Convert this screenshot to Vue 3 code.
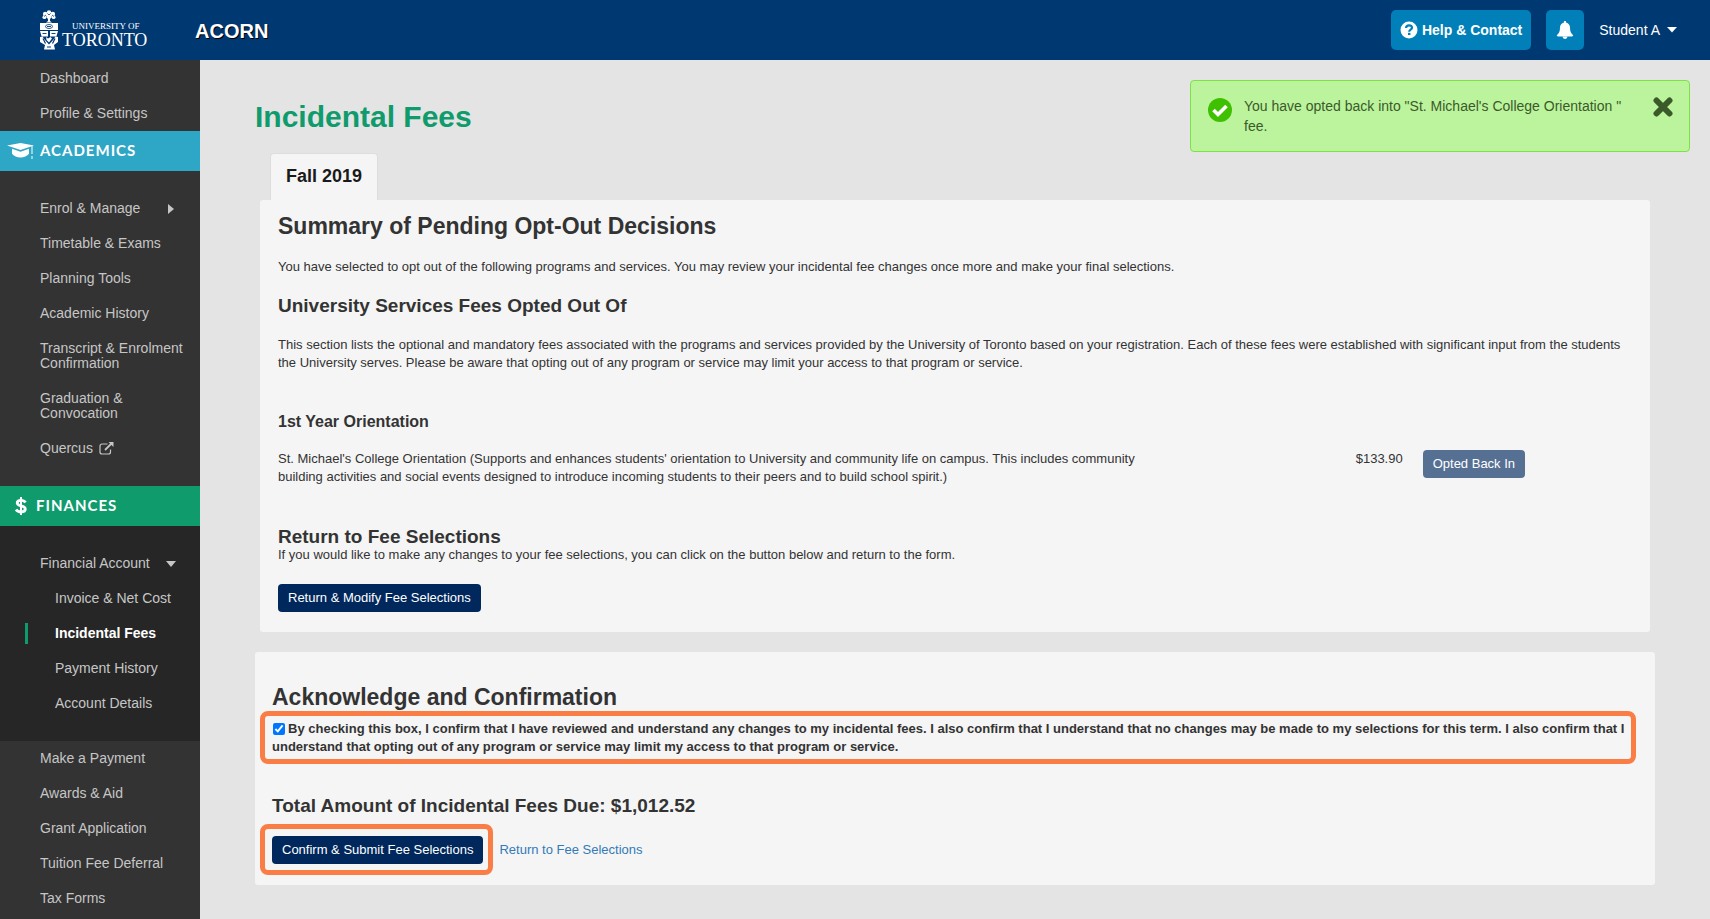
<script setup>
import { ref } from 'vue'

const topLinks = ['Dashboard', 'Profile & Settings']
const academics = ['Timetable & Exams', 'Planning Tools', 'Academic History', 'Transcript & Enrolment Confirmation', 'Graduation & Convocation']
const account = ['Invoice & Net Cost', 'Incidental Fees', 'Payment History', 'Account Details']
const payments = ['Make a Payment', 'Awards & Aid', 'Grant Application', 'Tuition Fee Deferral', 'Tax Forms']

const current = ref('Incidental Fees')
const confirmed = ref(true)
const showAlert = ref(true)
</script>

<template>
  <div class="page">
    <header class="topbar">
      <a href="#" class="logo">
        <svg class="crest" width="18" height="40" viewBox="0 0 18 40">
          <g fill="#fff">
            <circle cx="9" cy="2.4" r="2.2" />
            <circle cx="5.2" cy="4" r="2.3" />
            <circle cx="12.8" cy="4" r="2.3" />
            <circle cx="4.4" cy="7.2" r="1.9" />
            <circle cx="13.6" cy="7.2" r="1.9" />
            <circle cx="9" cy="6.2" r="2.6" />
            <path d="M8 7h2v4l2 1.6H6L8 11z" />
            <path d="M0 13h18v7H0z" />
            <path d="M0 21h8v5.500H1.600zM10 21h8l-1.600 5.500H10z" />
            <path d="M0 27l2.500-.5 2 3 4.500 5 4.500-5 2-3 2.500.5v5l-4 3 1 4.500H4l1-4.500-5-3z" />
          </g>
          <g fill="none" stroke="#003871">
            <path d="M4 6.500l2-1.500M12 5l2 1.500M7.500 3.500L9 5l1.500-1.500" stroke-width=".8" />
            <ellipse cx="9" cy="16.500" rx="3.500" ry="2" stroke-width=".8" />
            <path d="M7 16.500h4M2.500 23.500h4M11.500 23.500h4" stroke-width=".9" />
            <path d="M3 28.500l2.500 5M15 28.500l-2.500 5M7 37h4" stroke-width="1.200" />
          </g>
          <path d="M6 27l2 1.500 2.500-1.500 1.500 1.500-3 4-2.500-2.500z" fill="#fff" />
        </svg>
        <span class="wordmark">
          <span class="wordmark-top">UNIVERSITY OF</span>
          <span class="wordmark-main">TORONTO</span>
        </span>
      </a>
      <a href="#" class="brand">ACORN</a>
      <div class="tools">
        <button class="tool help" type="button">
          <svg width="18" height="18" viewBox="0 0 18 18">
            <circle cx="9" cy="9" r="8.500" fill="#fff" />
            <path d="M6 7c.2-1.800 1.400-2.600 3-2.600 1.700 0 3 .9 3 2.400 0 1.900-2.800 1.900-2.800 3.900" fill="none" stroke="#007fb8" stroke-width="2.200" />
            <path d="M8 11.800h2.400v2.200H8z" fill="#007fb8" />
          </svg>
          Help &amp; Contact
        </button>
        <button class="tool" type="button" aria-label="Notifications">
          <svg width="18" height="18" viewBox="0 0 18 18" fill="#fff">
            <path d="M9 0c.7 0 1.200.5 1.200 1.200v.5c2.400.5 3.800 2.300 3.800 4.800 0 4 1 6 3.200 7.700 0 .7-.6 1.200-1.200 1.200H2c-.7 0-1.200-.5-1.200-1.200C3 12.500 4 10.500 4 6.500c0-2.500 1.400-4.300 3.800-4.800v-.5C7.800.5 8.300 0 9 0z" />
            <path d="M6.500 15.500h5a2.500 2.500 0 0 1-5 0z" />
          </svg>
        </button>
        <button class="user" type="button">
          Student A
          <svg width="10" height="6" viewBox="0 0 10 6"><path d="M0 0h10L5 5.500z" fill="#fff" /></svg>
        </button>
      </div>
    </header>

    <div class="body">
      <nav class="sidebar">
        <a v-for="link in topLinks" :key="link" href="#" class="item">{{ link }}</a>

        <div class="section academics">
          <svg width="28" height="18" viewBox="0 0 28 18" fill="#fff">
            <path d="M0 3.500L13.500 1 27 3.500 13.500 8z" />
            <path d="M5 6.800l8.500 3 8.500-3v5c-3.500 4.800-13.500 4.800-17 0z" />
            <path d="M24.500 4h1v8h-1zM24.500 14h1v3h-1z" />
          </svg>
          <span>ACADEMICS</span>
        </div>
        <div class="group">
          <a href="#" class="item">
            Enrol &amp; Manage
            <svg class="arrow" width="8" height="10" viewBox="0 0 8 10"><path d="M0 0l6 5-6 5z" fill="#c6c6c6" /></svg>
          </a>
          <a v-for="link in academics" :key="link" href="#" class="item">{{ link }}</a>
          <a href="#" class="item">
            Quercus
            <svg class="external" width="15" height="13" viewBox="0 0 15 13">
              <path d="M8.500 2H3a2 2 0 0 0-2 2v6a2 2 0 0 0 2 2h6.500a2 2 0 0 0 2-2V7.500" fill="none" stroke="#c6c6c6" stroke-width="1.200" />
              <path d="M6 8l6.500-6.500" stroke="#c6c6c6" stroke-width="1.800" />
              <path d="M9.500 0H14.500v5z" fill="#c6c6c6" />
            </svg>
          </a>
        </div>

        <div class="section finances">
          <svg width="12" height="18" viewBox="0 0 12 18">
            <path d="M10.500 5.500C9.500 4 8 3.400 6 3.400c-2.400 0-3.800 1-3.800 2.600C2.200 9.800 10.300 7.800 10.300 12c0 1.800-1.600 2.800-4.200 2.800-2.200 0-4-.7-5-2.300" fill="none" stroke="#fff" stroke-width="2.800" />
            <path d="M6 0v18" stroke="#fff" stroke-width="2" />
          </svg>
          <span>FINANCES</span>
        </div>
        <div class="group account">
          <a href="#" class="item">
            Financial Account
            <svg class="arrow" width="10" height="6" viewBox="0 0 10 6"><path d="M0 0h10L5 6z" fill="#c6c6c6" /></svg>
          </a>
          <a
            v-for="link in account"
            :key="link"
            href="#"
            class="item sub"
            :class="{ active: link === current }"
            @click.prevent="current = link"
          >{{ link }}</a>
        </div>
        <a v-for="link in payments" :key="link" href="#" class="item">{{ link }}</a>
      </nav>

      <main class="content">
        <h1>Incidental Fees</h1>

        <div v-if="showAlert" class="alert" role="alert">
          <svg class="check" width="24" height="24" viewBox="0 0 24 24">
            <circle cx="12" cy="12" r="12" fill="#3fc000" />
            <path d="M5.500 12l4.500 4.500 8.500-8.500" fill="none" stroke="#fff" stroke-width="3.600" />
          </svg>
          <p>You have opted back into "St. Michael's College Orientation " fee.</p>
          <button class="close" type="button" aria-label="Close" @click="showAlert = false">
            <svg width="20" height="20" viewBox="0 0 20 20">
              <path d="M3.500 3.500l13 13M16.500 3.500l-13 13" stroke="#3b5a2a" stroke-width="6" stroke-linecap="round" />
            </svg>
          </button>
        </div>

        <div class="tabs">
          <button class="tab" type="button">Fall 2019</button>
        </div>

        <section class="panel summary">
          <h2>Summary of Pending Opt-Out Decisions</h2>
          <p>You have selected to opt out of the following programs and services. You may review your incidental fee changes once more and make your final selections.</p>
          <h3>University Services Fees Opted Out Of</h3>
          <p>This section lists the optional and mandatory fees associated with the programs and services provided by the University of Toronto based on your registration. Each of these fees were established with significant input from the students the University serves. Please be aware that opting out of any program or service may limit your access to that program or service.</p>
          <h4>1st Year Orientation</h4>
          <div class="fee">
            <p>St. Michael's College Orientation (Supports and enhances students' orientation to University and community life on campus. This includes community building activities and social events designed to introduce incoming students to their peers and to build school spirit.)</p>
            <span class="price">$133.90</span>
            <button class="btn muted" type="button">Opted Back In</button>
          </div>
          <h3 class="return">Return to Fee Selections</h3>
          <p>If you would like to make any changes to your fee selections, you can click on the button below and return to the form.</p>
          <button class="btn" type="button">Return &amp; Modify Fee Selections</button>
        </section>

        <section class="panel confirm">
          <h2>Acknowledge and Confirmation</h2>
          <div class="highlight">
            <input id="agree" v-model="confirmed" type="checkbox">
            <label for="agree">By checking this box, I confirm that I have reviewed and understand any changes to my incidental fees. I also confirm that I understand that no changes may be made to my selections for this term. I also confirm that I understand that opting out of any program or service may limit my access to that program or service.</label>
          </div>
          <h3>Total Amount of Incidental Fees Due: $1,012.52</h3>
          <div class="actions">
            <div class="highlight submit">
              <button class="btn" type="button">Confirm &amp; Submit Fee Selections</button>
            </div>
            <a href="#">Return to Fee Selections</a>
          </div>
        </section>
      </main>
    </div>
  </div>
</template>

<style>
body {
  margin: 0;
  background: #e4e4e4;
}
</style>

<style scoped>
* {
  box-sizing: border-box;
}
.page {
  display: flex;
  flex-direction: column;
  min-height: 100vh;
  font-family: "Liberation Sans", Arial, sans-serif;
  font-size: 13px;
  line-height: 18px;
  color: #333;
}
h1, h2, h3, h4, p {
  margin: 0;
}
a {
  text-decoration: none;
}
button {
  font-family: inherit;
  cursor: pointer;
}

/* top bar */
.topbar {
  display: flex;
  align-items: center;
  height: 60px;
  padding: 0 33px 0 40px;
  background: #003871;
  color: #fff;
}
.logo {
  display: flex;
  gap: 4px;
  width: 155px;
  color: #fff;
}
.wordmark {
  display: flex;
  flex-direction: column;
  padding-top: 12px;
  font-family: "Liberation Serif", "Times New Roman", serif;
}
.wordmark-top {
  padding-left: 10px;
  font-size: 9px;
  line-height: 9px;
}
.wordmark-main {
  font-size: 18px;
  line-height: 18px;
}
.brand {
  padding-top: 2px;
  color: #fff;
  font-size: 20px;
  font-weight: bold;
  text-shadow: 1px 1px 0 #000;
}
.tools {
  display: flex;
  gap: 15px;
  margin-left: auto;
}
.tool {
  display: flex;
  align-items: center;
  gap: 4px;
  height: 40px;
  padding: 0 10px;
  border: 0;
  border-radius: 5px;
  background: #007fb8;
  color: #fff;
  font-size: 14px;
  font-weight: bold;
}
.help {
  padding: 0 9px;
}
.user {
  display: flex;
  align-items: center;
  gap: 7px;
  padding: 0;
  border: 0;
  background: none;
  color: #fff;
  font-size: 14px;
}

/* sidebar */
.body {
  display: flex;
  flex: 1;
}
.sidebar {
  flex: 0 0 200px;
  padding-top: 1px;
  background: #333;
}
.item {
  display: flex;
  align-items: center;
  padding: 10px 16px 10px 40px;
  color: #c6c6c6;
  font-size: 14px;
  line-height: 15px;
}
.arrow {
  margin-left: auto;
  margin-right: 8px;
}
.external {
  margin-left: 6px;
}
.section {
  display: flex;
  align-items: center;
  height: 40px;
  color: #fff;
  font-family: Lato, sans-serif;
  font-size: 15px;
  font-weight: bold;
  letter-spacing: 1px;
}
.section span {
  padding-bottom: 2px;
}
.academics {
  gap: 5px;
  padding-left: 7px;
  background: #2ea6c5;
}
.finances {
  gap: 9px;
  padding-left: 15px;
  background: #0f9b6c;
}
.group {
  padding: 20px 0;
}
.account {
  background: #262626;
}
.sub {
  margin-left: 25px;
  padding: 0 0 0 30px;
  height: 35px;
}
.active {
  height: 21px;
  margin-top: 7px;
  margin-bottom: 7px;
  padding-left: 27px;
  border-left: 3px solid #0f9b6c;
  color: #fff;
  font-weight: bold;
}

/* main column */
.content {
  position: relative;
  flex: 1;
  min-width: 0;
  padding: 36px 55px 34px;
}
h1 {
  color: #0f9b6c;
  font-size: 30px;
  line-height: 42px;
}
h2 {
  font-size: 23px;
  line-height: 28px;
}
h3 {
  font-size: 19px;
  line-height: 24px;
}
h4 {
  font-size: 16px;
  line-height: 20px;
}
.alert {
  position: absolute;
  top: 20px;
  right: 20px;
  display: flex;
  align-items: flex-start;
  width: 500px;
  padding: 15px 16px;
  border: 1px solid #7be342;
  border-radius: 4px;
  background: #bbf49d;
  color: #3b5a2a;
  font-size: 14px;
  line-height: 20px;
}
.check {
  flex: none;
  margin: 2px 12px 0 1px;
}
.close {
  display: flex;
  margin-left: auto;
  padding: 1px 0 1px 20px;
  border: 0;
  background: none;
}
.tabs {
  display: flex;
  padding: 15px 15px 0;
}
.tab {
  height: 47px;
  padding: 0 15px 2px;
  border: 1px solid #ddd;
  border-bottom: 0;
  border-radius: 4px 4px 0 0;
  background: #f5f5f5;
  color: #1a1a1a;
  font-size: 18px;
  font-weight: bold;
}
.panel {
  border-radius: 3px;
  background: #f5f5f5;
}
.summary {
  margin: 0 5px;
  padding: 12px 13px 20px 18px;
}
.summary h2 {
  margin-bottom: 18px;
}
.summary h3 {
  margin: 18px 0;
}
.summary h4 {
  margin: 40px 0 18px;
}
.fee {
  display: grid;
  grid-template-columns: 19fr 5fr 5fr;
  align-items: start;
}
.price {
  text-align: right;
}
.btn {
  height: 28px;
  padding: 0 10px 2px;
  border: 0;
  border-radius: 4px;
  background: #00285c;
  color: #fff;
  font-size: 13px;
}
.muted {
  justify-self: start;
  margin-left: 20px;
  background: #567094;
}
.summary .return {
  margin: 42px 0 0;
  line-height: 18px;
}
.summary > .btn {
  margin-top: 20px;
}
.confirm {
  margin-top: 20px;
  padding: 31px 19px 10px 5px;
}
.confirm h2,
.confirm h3 {
  padding-left: 12px;
}
.highlight {
  padding: 4px 3px 3px 7px;
  border: 5px solid #fa7d46;
  border-radius: 8px;
  font-weight: bold;
}
.highlight input {
  width: 12px;
  height: 12px;
  margin: 0 3px 0 1px;
  vertical-align: -2px;
}
.confirm h3 {
  margin: 30px 0 6px;
}
.actions {
  display: flex;
  align-items: center;
  gap: 6px;
}
.actions a {
  color: #337ab7;
}
.submit {
  display: flex;
  padding: 7px 5px 6px 7px;
}
</style>
